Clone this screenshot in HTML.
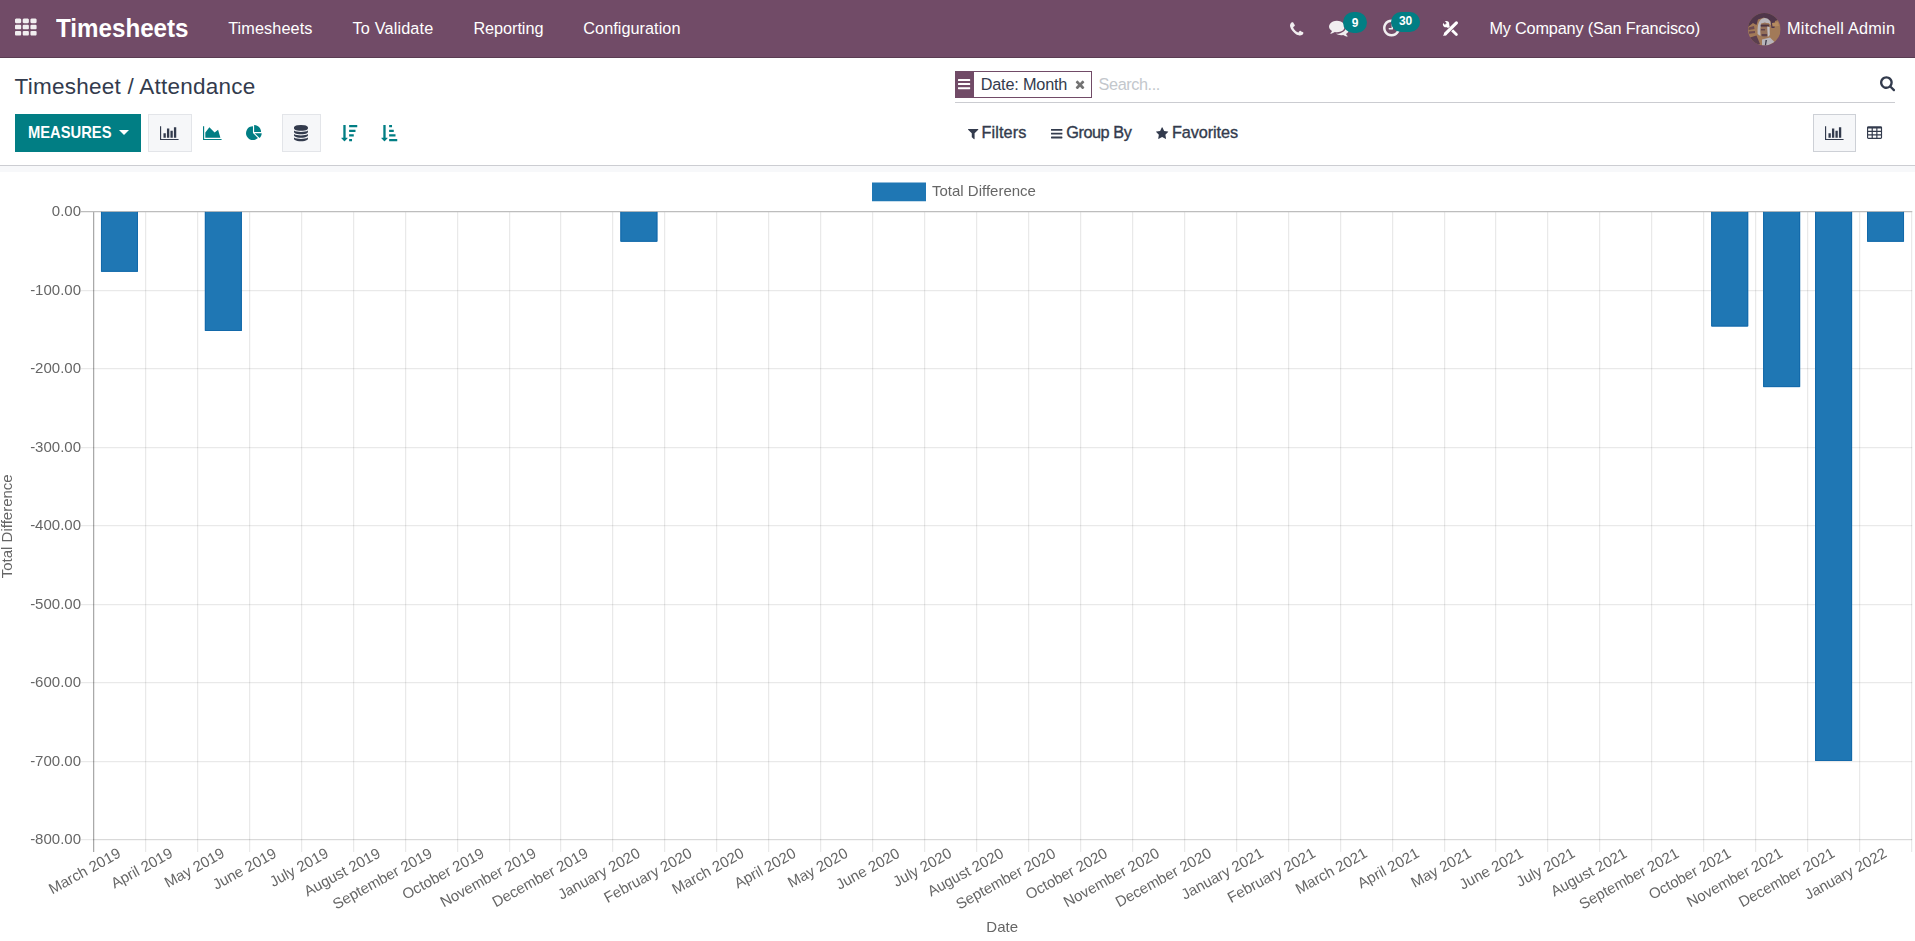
<!DOCTYPE html>
<html lang="en"><head><meta charset="utf-8"><title>Odoo - Timesheet / Attendance</title>
<style>
*{box-sizing:border-box}
html,body{margin:0;padding:0}
body{width:1915px;height:941px;overflow:hidden;background:#fff;font-family:"Liberation Sans",Arial,sans-serif;position:relative}
.navbar{position:absolute;left:0;top:0;width:1915px;height:58px;background:#714B67;border-bottom:1px solid #5a3c52}
.cp{position:absolute;left:0;top:58px;width:1915px;height:108px;background:#fff;border-bottom:1px solid #cccdd2}
.cp > *{margin-top:-58px}
.content{position:absolute;left:0;top:166px;width:1915px;height:775px;background:#f7f8fa}
.content:before{content:"";position:absolute;left:0;top:6px;width:1915px;height:769px;background:#fff}
.chart{position:absolute;margin-top:-166px;will-change:transform}
.t{position:absolute;white-space:pre;display:block}
.ic{position:absolute;display:block;overflow:visible}
.badge{position:absolute;border-radius:11px;background:#017e84}
.sk{-webkit-text-stroke:0.35px currentColor}
.btn-primary{position:absolute;background:#017e84}
.btn-active{position:absolute;background:#f6f7f9;border:1px solid #e3e5e9}
.btn-active.vs{border-color:#cdd0d6}
.caret{position:absolute;width:0;height:0;border-left:5px solid transparent;border-right:5px solid transparent;border-top:5.5px solid #fff}
.facet{position:absolute;border:1px solid #714B67;background:#fff}
.facet i{position:absolute;left:-1px;top:-1px;width:18.8px;height:27px;background:#714B67}
.sline{position:absolute;height:1px;background:#cbccd1}
</style></head>
<body>
<header class="navbar"><svg class="ic" style="left:14.80px;top:17.46px;width:21.60px;height:21.60px;" viewBox="0 -1536 1792 1792"><path fill="#f1eef0" transform="scale(1,-1)" d="M512 288v-192q0 -40 -28 -68t-68 -28h-320q-40 0 -68 28t-28 68v192q0 40 28 68t68 28h320q40 0 68 -28t28 -68zM512 800v-192q0 -40 -28 -68t-68 -28h-320q-40 0 -68 28t-28 68v192q0 40 28 68t68 28h320q40 0 68 -28t28 -68zM1152 288v-192q0 -40 -28 -68t-68 -28h-320 q-40 0 -68 28t-28 68v192q0 40 28 68t68 28h320q40 0 68 -28t28 -68zM512 1312v-192q0 -40 -28 -68t-68 -28h-320q-40 0 -68 28t-28 68v192q0 40 28 68t68 28h320q40 0 68 -28t28 -68zM1152 800v-192q0 -40 -28 -68t-68 -28h-320q-40 0 -68 28t-28 68v192q0 40 28 68t68 28 h320q40 0 68 -28t28 -68zM1792 288v-192q0 -40 -28 -68t-68 -28h-320q-40 0 -68 28t-28 68v192q0 40 28 68t68 28h320q40 0 68 -28t28 -68zM1152 1312v-192q0 -40 -28 -68t-68 -28h-320q-40 0 -68 28t-28 68v192q0 40 28 68t68 28h320q40 0 68 -28t28 -68zM1792 800v-192 q0 -40 -28 -68t-68 -28h-320q-40 0 -68 28t-28 68v192q0 40 28 68t68 28h320q40 0 68 -28t28 -68zM1792 1312v-192q0 -40 -28 -68t-68 -28h-320q-40 0 -68 28t-28 68v192q0 40 28 68t68 28h320q40 0 68 -28t28 -68z"/></svg>
<span id="brand" class="t" style="left:56.20px;top:14px;font-size:25px;line-height:28px;color:#fff;font-weight:700;letter-spacing:0.000px;transform:scaleX(0.9664);transform-origin:0 0;">Timesheets</span>
<span id="m1" class="t" style="left:228.20px;top:19px;font-size:16.25px;line-height:18px;color:#fff;font-weight:400;letter-spacing:0.090px;">Timesheets</span>
<span id="m2" class="t" style="left:352.60px;top:19px;font-size:16.25px;line-height:18px;color:#fff;font-weight:400;letter-spacing:0.145px;">To Validate</span>
<span id="m3" class="t" style="left:473.40px;top:19px;font-size:16.25px;line-height:18px;color:#fff;font-weight:400;letter-spacing:-0.052px;">Reporting</span>
<span id="m4" class="t" style="left:583.30px;top:19px;font-size:16.25px;line-height:18px;color:#fff;font-weight:400;letter-spacing:0.041px;">Configuration</span>
<svg class="ic" style="left:1290.00px;top:20.69px;width:13.36px;height:17.00px;" viewBox="0 -1536 1408 1792"><path fill="#f1eef0" transform="scale(1,-1)" d="M1408 296q0 -27 -10 -70.5t-21 -68.5q-21 -50 -122 -106q-94 -51 -186 -51q-27 0 -53 3.5t-57.5 12.5t-47 14.5t-55.5 20.5t-49 18q-98 35 -175 83q-127 79 -264 216t-216 264q-48 77 -83 175q-3 9 -18 49t-20.5 55.5t-14.5 47t-12.5 57.5t-3.5 53q0 92 51 186 q56 101 106 122q25 11 68.5 21t70.5 10q14 0 21 -3q18 -6 53 -76q11 -19 30 -54t35 -63.5t31 -53.5q3 -4 17.5 -25t21.5 -35.5t7 -28.5q0 -20 -28.5 -50t-62 -55t-62 -53t-28.5 -46q0 -9 5 -22.5t8.5 -20.5t14 -24t11.5 -19q76 -137 174 -235t235 -174q2 -1 19 -11.5t24 -14 t20.5 -8.5t22.5 -5q18 0 46 28.5t53 62t55 62t50 28.5q14 0 28.5 -7t35.5 -21.5t25 -17.5q25 -15 53.5 -31t63.5 -35t54 -30q70 -35 76 -53q3 -7 3 -21z"/></svg>
<svg class="ic" style="left:1329.00px;top:17.54px;width:20.00px;height:20.00px;" viewBox="0 -1536 1792 1792"><path fill="#f1eef0" transform="scale(1,-1)" d="M1408 768q0 -139 -94 -257t-256.5 -186.5t-353.5 -68.5q-86 0 -176 16q-124 -88 -278 -128q-36 -9 -86 -16h-3q-11 0 -20.5 8t-11.5 21q-1 3 -1 6.5t0.5 6.5t2 6l2.5 5t3.5 5.5t4 5t4.5 5t4 4.5q5 6 23 25t26 29.5t22.5 29t25 38.5t20.5 44q-124 72 -195 177t-71 224 q0 139 94 257t256.5 186.5t353.5 68.5t353.5 -68.5t256.5 -186.5t94 -257zM1792 512q0 -120 -71 -224.5t-195 -176.5q10 -24 20.5 -44t25 -38.5t22.5 -29t26 -29.5t23 -25q1 -1 4 -4.5t4.5 -5t4 -5t3.5 -5.5l2.5 -5t2 -6t0.5 -6.5t-1 -6.5q-3 -14 -13 -22t-22 -7 q-50 7 -86 16q-154 40 -278 128q-90 -16 -176 -16q-271 0 -472 132q58 -4 88 -4q161 0 309 45t264 129q125 92 192 212t67 254q0 77 -23 152q129 -71 204 -178t75 -230z"/></svg>
<span class="badge" style="left:1343px;top:11.5px;width:24px;height:21px"></span>
<span id="b1" class="t" style="left:1351.70px;top:16px;font-size:12px;line-height:14px;color:#fff;font-weight:700;letter-spacing:-0.084px;">9</span>
<svg class="ic" style="left:1383.00px;top:17.87px;width:17.14px;height:20.00px;" viewBox="0 -1536 1536 1792"><path fill="#f1eef0" transform="scale(1,-1)" d="M896 992v-448q0 -14 -9 -23t-23 -9h-320q-14 0 -23 9t-9 23v64q0 14 9 23t23 9h224v352q0 14 9 23t23 9h64q14 0 23 -9t9 -23zM1312 640q0 148 -73 273t-198 198t-273 73t-273 -73t-198 -198t-73 -273t73 -273t198 -198t273 -73t273 73t198 198t73 273zM1536 640 q0 -209 -103 -385.5t-279.5 -279.5t-385.5 -103t-385.5 103t-279.5 279.5t-103 385.5t103 385.5t279.5 279.5t385.5 103t385.5 -103t279.5 -279.5t103 -385.5z"/></svg>
<span class="badge" style="left:1391.2px;top:11.5px;width:29px;height:20.5px"></span>
<span id="b2" class="t" style="left:1399.00px;top:14px;font-size:12px;line-height:14px;color:#fff;font-weight:700;letter-spacing:-0.180px;">30</span>
<svg class="ic" style="left:1442.8px;top:20.9px;width:15.3px;height:15.1px" viewBox="0 0 15.3 15.1"><circle cx="3.1" cy="3.2" r="3.15" fill="#fff"/><path d="M-0.4 -0.3 L2.7 2.8" stroke="#714B67" stroke-width="2.5" stroke-linecap="round" fill="none"/><path d="M3.6 3.7 L13.4 13.5" stroke="#fff" stroke-width="2.8" stroke-linecap="round" fill="none"/><path d="M13.4 1.9 L2.6 12.7" stroke="#714B67" stroke-width="4.4" stroke-linecap="butt" fill="none"/><path d="M13.4 1.9 L2.6 12.7" stroke="#fff" stroke-width="3.2" stroke-linecap="round" fill="none"/><path d="M3.85 13.95 L1.35 11.45 L0.2 15.1 Z" fill="#fff"/></svg>
<span id="comp" class="t" style="left:1489.40px;top:19px;font-size:16.25px;line-height:18px;color:#fff;font-weight:400;letter-spacing:-0.170px;">My Company (San Francisco)</span>
<svg class="ic" style="left:1747.8px;top:12.7px;width:32.6px;height:32.6px" viewBox="0 0 32.6 32.6"><defs><clipPath id="avc"><circle cx="16.3" cy="16.3" r="16.3"/></clipPath></defs><g clip-path="url(#avc)"><rect width="32.6" height="32.6" fill="#a27a58"/><path d="M0 0 H32.6 V6 L27 8 L26.5 15 L23.5 15 L22.5 8 L16 4.5 L10 6.5 L8.5 12 L5 10 L0 14 Z" fill="#4f364a"/><path d="M9.6 21 Q8.6 6 16.5 5 Q23 5.4 22.6 12 L20.5 10 L13.2 10.2 L12.4 23 Z" fill="#b9b5ba"/><ellipse cx="16.8" cy="17" rx="4.5" ry="7.4" fill="#94705a"/><rect x="12.6" y="11.6" width="8.6" height="2" fill="#4c3442"/><rect x="13" y="16.2" width="4" height="1.2" fill="#5a3f49"/><rect x="13.6" y="21" width="5.6" height="2.2" fill="#5d424b"/><path d="M19.2 13.5 L21.6 14 L21.8 22 L19.8 24 Z" fill="#c4c0c3"/><path d="M14 26.5 L22 24.5 L26.5 29 L20 32.6 L14 32.6 Z" fill="#b7b4ba"/><path d="M17.5 27 L19 27 L18 32.6 L16.8 32.6 Z" fill="#3d3a4a"/><path d="M2 24.5 L8.5 22.5 L12 31 L8 32.6 L2 29 Z" fill="#5b3f4f"/><path d="M0.5 14.5 L6 13 L6.5 16 L0.5 17 Z M1 18.5 L7 18 L7 20 L1 20.8 Z" fill="#6c4a50"/><path d="M24 10 L30 9 L31 13 L24.5 13.5 Z" fill="#b58a60"/></g></svg>
<span id="user" class="t" style="left:1787.00px;top:19px;font-size:16.25px;line-height:18px;color:#fff;font-weight:400;letter-spacing:0.245px;">Mitchell Admin</span></header>
<section class="cp"><span id="bc" class="t" style="left:14.60px;top:74px;font-size:22.5px;line-height:25px;color:#333b4d;font-weight:400;letter-spacing:0.242px;">Timesheet / Attendance</span>
<div class="btn-primary" style="left:15px;top:114px;width:126px;height:37.6px"></div>
<span id="meas" class="t" style="left:27.70px;top:123px;font-size:16.25px;line-height:18px;color:#fff;font-weight:700;letter-spacing:0.000px;transform:scaleX(0.9065);transform-origin:0 0;">MEASURES</span>
<span class="caret" style="left:119px;top:130.2px"></span>
<div class="btn-active" style="left:148px;top:114px;width:43.7px;height:37.6px"></div>
<svg class="ic" style="left:160.40px;top:125.30px;width:18.57px;height:16.25px;" viewBox="0 -1536 2048 1792"><path fill="#333b4d" transform="scale(1,-1)" d="M640 640v-512h-256v512h256zM1024 1152v-1024h-256v1024h256zM2048 0v-128h-2048v1536h128v-1408h1920zM1408 896v-768h-256v768h256zM1792 1280v-1152h-256v1152h256z"/></svg>
<svg class="ic" style="left:203.20px;top:125.30px;width:18.57px;height:16.25px;" viewBox="0 -1536 2048 1792"><path fill="#017e84" transform="scale(1,-1)" d="M2048 0v-128h-2048v1536h128v-1408h1920zM1664 1024l256 -896h-1664v576l448 576l576 -576z"/></svg>
<svg class="ic" style="left:245.90px;top:125.30px;width:16.25px;height:16.25px;" viewBox="0 -1536 1792 1792"><path fill="#017e84" transform="scale(1,-1)" d="M768 646l546 -546q-106 -108 -247.5 -168t-298.5 -60q-209 0 -385.5 103t-279.5 279.5t-103 385.5t103 385.5t279.5 279.5t385.5 103v-762zM955 640h773q0 -157 -60 -298.5t-168 -247.5zM1664 768h-768v768q209 0 385.5 -103t279.5 -279.5t103 -385.5z"/></svg>
<div class="btn-active" style="left:282px;top:114px;width:38.9px;height:37.6px"></div>
<svg class="ic" style="left:294.40px;top:125.30px;width:13.93px;height:16.25px;" viewBox="0 -1536 1536 1792"><path fill="#333b4d" transform="scale(1,-1)" d="M768 768q237 0 443 43t325 127v-170q0 -69 -103 -128t-280 -93.5t-385 -34.5t-385 34.5t-280 93.5t-103 128v170q119 -84 325 -127t443 -43zM768 0q237 0 443 43t325 127v-170q0 -69 -103 -128t-280 -93.5t-385 -34.5t-385 34.5t-280 93.5t-103 128v170q119 -84 325 -127 t443 -43zM768 384q237 0 443 43t325 127v-170q0 -69 -103 -128t-280 -93.5t-385 -34.5t-385 34.5t-280 93.5t-103 128v170q119 -84 325 -127t443 -43zM768 1536q208 0 385 -34.5t280 -93.5t103 -128v-128q0 -69 -103 -128t-280 -93.5t-385 -34.5t-385 34.5t-280 93.5 t-103 128v128q0 69 103 128t280 93.5t385 34.5z"/></svg>
<svg class="ic" style="left:340.70px;top:125.30px;width:16.25px;height:16.25px;" viewBox="0 -1536 1792 1792"><path fill="#017e84" transform="scale(1,-1)" d="M1216 -32v-192q0 -14 -9 -23t-23 -9h-256q-14 0 -23 9t-9 23v192q0 14 9 23t23 9h256q14 0 23 -9t9 -23zM736 96q0 -12 -10 -24l-319 -319q-10 -9 -23 -9q-12 0 -23 9l-320 320q-15 16 -7 35q8 20 30 20h192v1376q0 14 9 23t23 9h192q14 0 23 -9t9 -23v-1376h192 q14 0 23 -9t9 -23zM1408 480v-192q0 -14 -9 -23t-23 -9h-448q-14 0 -23 9t-9 23v192q0 14 9 23t23 9h448q14 0 23 -9t9 -23zM1600 992v-192q0 -14 -9 -23t-23 -9h-640q-14 0 -23 9t-9 23v192q0 14 9 23t23 9h640q14 0 23 -9t9 -23zM1792 1504v-192q0 -14 -9 -23t-23 -9h-832 q-14 0 -23 9t-9 23v192q0 14 9 23t23 9h832q14 0 23 -9t9 -23z"/></svg>
<svg class="ic" style="left:381.00px;top:125.30px;width:16.25px;height:16.25px;" viewBox="0 -1536 1792 1792"><path fill="#017e84" transform="scale(1,-1)" d="M736 96q0 -12 -10 -24l-319 -319q-10 -9 -23 -9q-12 0 -23 9l-320 320q-15 16 -7 35q8 20 30 20h192v1376q0 14 9 23t23 9h192q14 0 23 -9t9 -23v-1376h192q14 0 23 -9t9 -23zM1792 -32v-192q0 -14 -9 -23t-23 -9h-832q-14 0 -23 9t-9 23v192q0 14 9 23t23 9h832 q14 0 23 -9t9 -23zM1600 480v-192q0 -14 -9 -23t-23 -9h-640q-14 0 -23 9t-9 23v192q0 14 9 23t23 9h640q14 0 23 -9t9 -23zM1408 992v-192q0 -14 -9 -23t-23 -9h-448q-14 0 -23 9t-9 23v192q0 14 9 23t23 9h448q14 0 23 -9t9 -23zM1216 1504v-192q0 -14 -9 -23t-23 -9h-256 q-14 0 -23 9t-9 23v192q0 14 9 23t23 9h256q14 0 23 -9t9 -23z"/></svg>
<div class="facet" style="left:955px;top:71px;width:137px;height:27px"><i></i></div>
<svg class="ic" style="left:958.20px;top:77.37px;width:12.17px;height:14.20px;" viewBox="0 -1536 1536 1792"><path fill="#fff" transform="scale(1,-1)" d="M1536 192v-128q0 -26 -19 -45t-45 -19h-1408q-26 0 -45 19t-19 45v128q0 26 19 45t45 19h1408q26 0 45 -19t19 -45zM1536 704v-128q0 -26 -19 -45t-45 -19h-1408q-26 0 -45 19t-19 45v128q0 26 19 45t45 19h1408q26 0 45 -19t19 -45zM1536 1216v-128q0 -26 -19 -45 t-45 -19h-1408q-26 0 -45 19t-19 45v128q0 26 19 45t45 19h1408q26 0 45 -19t19 -45z"/></svg>
<span id="facet" class="t" style="left:980.70px;top:75px;font-size:16.25px;line-height:18px;color:#333b4d;font-weight:400;letter-spacing:-0.183px;">Date: Month</span>
<svg class="ic" style="left:1075.31px;top:78.19px;width:10.06px;height:12.80px;" viewBox="0 -1536 1408 1792"><path fill="#737373" transform="scale(1,-1)" d="M1298 214q0 -40 -28 -68l-136 -136q-28 -28 -68 -28t-68 28l-294 294l-294 -294q-28 -28 -68 -28t-68 28l-136 136q-28 28 -28 68t28 68l294 294l-294 294q-28 28 -28 68t28 68l136 136q28 28 68 28t68 -28l294 -294l294 294q28 28 68 28t68 -28l136 -136q28 -28 28 -68 t-28 -68l-294 -294l294 -294q28 -28 28 -68z"/></svg>
<span id="ph" class="t" style="left:1098.60px;top:75px;font-size:16.25px;line-height:18px;color:#c3c7cc;font-weight:400;letter-spacing:-0.415px;">Search...</span>
<svg class="ic" style="left:1879.50px;top:75.44px;width:15.09px;height:16.25px;" viewBox="0 -1536 1664 1792"><path fill="#333b4d" transform="scale(1,-1)" d="M1152 704q0 185 -131.5 316.5t-316.5 131.5t-316.5 -131.5t-131.5 -316.5t131.5 -316.5t316.5 -131.5t316.5 131.5t131.5 316.5zM1664 -128q0 -52 -38 -90t-90 -38q-54 0 -90 38l-343 342q-179 -124 -399 -124q-143 0 -273.5 55.5t-225 150t-150 225t-55.5 273.5 t55.5 273.5t150 225t225 150t273.5 55.5t273.5 -55.5t225 -150t150 -225t55.5 -273.5q0 -220 -124 -399l343 -343q37 -37 37 -90z"/></svg>
<div class="sline" style="left:955px;top:102px;width:939.6px"></div>
<svg class="ic" style="left:967.51px;top:127.11px;width:10.37px;height:13.20px;" viewBox="0 -1536 1408 1792"><path fill="#333b4d" transform="scale(1,-1)" d="M1403 1241q17 -41 -14 -70l-493 -493v-742q0 -42 -39 -59q-13 -5 -25 -5q-27 0 -45 19l-256 256q-19 19 -19 45v486l-493 493q-31 29 -14 70q17 39 59 39h1280q42 0 59 -39z"/></svg>
<span id="f1" class="t sk" style="left:981.50px;top:123px;font-size:16.25px;line-height:18px;color:#333b4d;font-weight:400;letter-spacing:0.108px;">Filters</span>
<svg class="ic" style="left:1050.90px;top:126.80px;width:11.40px;height:13.30px;" viewBox="0 -1536 1536 1792"><path fill="#333b4d" transform="scale(1,-1)" d="M1536 192v-128q0 -26 -19 -45t-45 -19h-1408q-26 0 -45 19t-19 45v128q0 26 19 45t45 19h1408q26 0 45 -19t19 -45zM1536 704v-128q0 -26 -19 -45t-45 -19h-1408q-26 0 -45 19t-19 45v128q0 26 19 45t45 19h1408q26 0 45 -19t19 -45zM1536 1216v-128q0 -26 -19 -45 t-45 -19h-1408q-26 0 -45 19t-19 45v128q0 26 19 45t45 19h1408q26 0 45 -19t19 -45z"/></svg>
<span id="f2" class="t sk" style="left:1066.20px;top:123px;font-size:16.25px;line-height:18px;color:#333b4d;font-weight:400;letter-spacing:-0.431px;">Group By</span>
<svg class="ic" style="left:1155.50px;top:127.06px;width:12.26px;height:13.20px;" viewBox="0 -1536 1664 1792"><path fill="#333b4d" transform="scale(1,-1)" d="M1664 889q0 -22 -26 -48l-363 -354l86 -500q1 -7 1 -20q0 -21 -10.5 -35.5t-30.5 -14.5q-19 0 -40 12l-449 236l-449 -236q-22 -12 -40 -12q-21 0 -31.5 14.5t-10.5 35.5q0 6 2 20l86 500l-364 354q-25 27 -25 48q0 37 56 46l502 73l225 455q19 41 49 41t49 -41l225 -455 l502 -73q56 -9 56 -46z"/></svg>
<span id="f3" class="t sk" style="left:1172.00px;top:123px;font-size:16.25px;line-height:18px;color:#333b4d;font-weight:400;letter-spacing:-0.092px;">Favorites</span>
<div class="btn-active vs" style="left:1813px;top:114px;width:42.6px;height:37.6px"></div>
<svg class="ic" style="left:1824.60px;top:125.30px;width:18.57px;height:16.25px;" viewBox="0 -1536 2048 1792"><path fill="#333b4d" transform="scale(1,-1)" d="M640 640v-512h-256v512h256zM1024 1152v-1024h-256v1024h256zM2048 0v-128h-2048v1536h128v-1408h1920zM1408 896v-768h-256v768h256zM1792 1280v-1152h-256v1152h256z"/></svg>
<svg class="ic" style="left:1867.00px;top:125.30px;width:15.09px;height:16.25px;" viewBox="0 -1536 1664 1792"><path fill="#333b4d" transform="scale(1,-1)" d="M512 160v192q0 14 -9 23t-23 9h-320q-14 0 -23 -9t-9 -23v-192q0 -14 9 -23t23 -9h320q14 0 23 9t9 23zM512 544v192q0 14 -9 23t-23 9h-320q-14 0 -23 -9t-9 -23v-192q0 -14 9 -23t23 -9h320q14 0 23 9t9 23zM1024 160v192q0 14 -9 23t-23 9h-320q-14 0 -23 -9t-9 -23 v-192q0 -14 9 -23t23 -9h320q14 0 23 9t9 23zM512 928v192q0 14 -9 23t-23 9h-320q-14 0 -23 -9t-9 -23v-192q0 -14 9 -23t23 -9h320q14 0 23 9t9 23zM1024 544v192q0 14 -9 23t-23 9h-320q-14 0 -23 -9t-9 -23v-192q0 -14 9 -23t23 -9h320q14 0 23 9t9 23zM1536 160v192 q0 14 -9 23t-23 9h-320q-14 0 -23 -9t-9 -23v-192q0 -14 9 -23t23 -9h320q14 0 23 9t9 23zM1024 928v192q0 14 -9 23t-23 9h-320q-14 0 -23 -9t-9 -23v-192q0 -14 9 -23t23 -9h320q14 0 23 9t9 23zM1536 544v192q0 14 -9 23t-23 9h-320q-14 0 -23 -9t-9 -23v-192 q0 -14 9 -23t23 -9h320q14 0 23 9t9 23zM1536 928v192q0 14 -9 23t-23 9h-320q-14 0 -23 -9t-9 -23v-192q0 -14 9 -23t23 -9h320q14 0 23 9t9 23zM1664 1248v-1088q0 -66 -47 -113t-113 -47h-1344q-66 0 -113 47t-47 113v1088q0 66 47 113t113 47h1344q66 0 113 -47t47 -113 z"/></svg></section>
<main class="content"><svg class="chart" width="1915" height="769" viewBox="0 172 1915 769" style="left:0;top:172px" font-family="Liberation Sans, Arial, Helvetica, sans-serif" font-size="15" fill="#666">
<rect x="872" y="182.5" width="54" height="18.75" fill="#1f77b4"/>
<text x="932" y="196.3">Total Difference</text>
<g><rect x="93" y="211.0" width="1.25" height="641.0" fill="#a9a9a9"/><rect x="145" y="211.0" width="1.25" height="641.0" fill="rgba(0,0,0,0.088)"/><rect x="197" y="211.0" width="1.25" height="641.0" fill="rgba(0,0,0,0.088)"/><rect x="249" y="211.0" width="1.25" height="641.0" fill="rgba(0,0,0,0.088)"/><rect x="301" y="211.0" width="1.25" height="641.0" fill="rgba(0,0,0,0.088)"/><rect x="353" y="211.0" width="1.25" height="641.0" fill="rgba(0,0,0,0.088)"/><rect x="405" y="211.0" width="1.25" height="641.0" fill="rgba(0,0,0,0.088)"/><rect x="457" y="211.0" width="1.25" height="641.0" fill="rgba(0,0,0,0.088)"/><rect x="509" y="211.0" width="1.25" height="641.0" fill="rgba(0,0,0,0.088)"/><rect x="560" y="211.0" width="1.25" height="641.0" fill="rgba(0,0,0,0.088)"/><rect x="612" y="211.0" width="1.25" height="641.0" fill="rgba(0,0,0,0.088)"/><rect x="664" y="211.0" width="1.25" height="641.0" fill="rgba(0,0,0,0.088)"/><rect x="716" y="211.0" width="1.25" height="641.0" fill="rgba(0,0,0,0.088)"/><rect x="768" y="211.0" width="1.25" height="641.0" fill="rgba(0,0,0,0.088)"/><rect x="820" y="211.0" width="1.25" height="641.0" fill="rgba(0,0,0,0.088)"/><rect x="872" y="211.0" width="1.25" height="641.0" fill="rgba(0,0,0,0.088)"/><rect x="924" y="211.0" width="1.25" height="641.0" fill="rgba(0,0,0,0.088)"/><rect x="976" y="211.0" width="1.25" height="641.0" fill="rgba(0,0,0,0.088)"/><rect x="1028" y="211.0" width="1.25" height="641.0" fill="rgba(0,0,0,0.088)"/><rect x="1080" y="211.0" width="1.25" height="641.0" fill="rgba(0,0,0,0.088)"/><rect x="1132" y="211.0" width="1.25" height="641.0" fill="rgba(0,0,0,0.088)"/><rect x="1184" y="211.0" width="1.25" height="641.0" fill="rgba(0,0,0,0.088)"/><rect x="1236" y="211.0" width="1.25" height="641.0" fill="rgba(0,0,0,0.088)"/><rect x="1288" y="211.0" width="1.25" height="641.0" fill="rgba(0,0,0,0.088)"/><rect x="1340" y="211.0" width="1.25" height="641.0" fill="rgba(0,0,0,0.088)"/><rect x="1392" y="211.0" width="1.25" height="641.0" fill="rgba(0,0,0,0.088)"/><rect x="1444" y="211.0" width="1.25" height="641.0" fill="rgba(0,0,0,0.088)"/><rect x="1495" y="211.0" width="1.25" height="641.0" fill="rgba(0,0,0,0.088)"/><rect x="1547" y="211.0" width="1.25" height="641.0" fill="rgba(0,0,0,0.088)"/><rect x="1599" y="211.0" width="1.25" height="641.0" fill="rgba(0,0,0,0.088)"/><rect x="1651" y="211.0" width="1.25" height="641.0" fill="rgba(0,0,0,0.088)"/><rect x="1703" y="211.0" width="1.25" height="641.0" fill="rgba(0,0,0,0.088)"/><rect x="1755" y="211.0" width="1.25" height="641.0" fill="rgba(0,0,0,0.088)"/><rect x="1807" y="211.0" width="1.25" height="641.0" fill="rgba(0,0,0,0.088)"/><rect x="1859" y="211.0" width="1.25" height="641.0" fill="rgba(0,0,0,0.088)"/><rect x="1911" y="211.0" width="1.25" height="641.0" fill="rgba(0,0,0,0.088)"/><rect x="81.0" y="211" width="1831.25" height="1.25" fill="#bdbdbd"/><rect x="81.0" y="290" width="1831.25" height="1.25" fill="rgba(0,0,0,0.088)"/><rect x="81.0" y="368" width="1831.25" height="1.25" fill="rgba(0,0,0,0.088)"/><rect x="81.0" y="447" width="1831.25" height="1.25" fill="rgba(0,0,0,0.088)"/><rect x="81.0" y="525" width="1831.25" height="1.25" fill="rgba(0,0,0,0.088)"/><rect x="81.0" y="604" width="1831.25" height="1.25" fill="rgba(0,0,0,0.088)"/><rect x="81.0" y="682" width="1831.25" height="1.25" fill="rgba(0,0,0,0.088)"/><rect x="81.0" y="761" width="1831.25" height="1.25" fill="rgba(0,0,0,0.088)"/><rect x="81.0" y="839" width="1831.25" height="1.25" fill="rgba(0,0,0,0.088)"/><rect x="93.0" y="839" width="1819.0" height="1.25" fill="rgba(0,0,0,0.07)"/></g>
<text x="81" y="216.0" text-anchor="end">0.00</text><text x="81" y="295.0" text-anchor="end">-100.00</text><text x="81" y="373.0" text-anchor="end">-200.00</text><text x="81" y="452.0" text-anchor="end">-300.00</text><text x="81" y="530.0" text-anchor="end">-400.00</text><text x="81" y="609.0" text-anchor="end">-500.00</text><text x="81" y="687.0" text-anchor="end">-600.00</text><text x="81" y="766.0" text-anchor="end">-700.00</text><text x="81" y="844.0" text-anchor="end">-800.00</text>
<rect x="100.97" y="211.9" width="37" height="59.90" fill="#1f77b4"/>
<path d="M101.47 211.9 V271.30 H137.47 V211.9" fill="none" stroke="#1369aa" stroke-width="1"/>
<rect x="204.86" y="211.9" width="37" height="119.10" fill="#1f77b4"/>
<path d="M205.36 211.9 V330.50 H241.36 V211.9" fill="none" stroke="#1369aa" stroke-width="1"/>
<rect x="620.40" y="211.9" width="37" height="29.85" fill="#1f77b4"/>
<path d="M620.90 211.9 V241.25 H656.90 V211.9" fill="none" stroke="#1369aa" stroke-width="1"/>
<rect x="1711.20" y="211.9" width="37" height="114.60" fill="#1f77b4"/>
<path d="M1711.70 211.9 V326.00 H1747.70 V211.9" fill="none" stroke="#1369aa" stroke-width="1"/>
<rect x="1763.14" y="211.9" width="37" height="175.20" fill="#1f77b4"/>
<path d="M1763.64 211.9 V386.60 H1799.64 V211.9" fill="none" stroke="#1369aa" stroke-width="1"/>
<rect x="1815.09" y="211.9" width="37" height="549.10" fill="#1f77b4"/>
<path d="M1815.59 211.9 V760.50 H1851.59 V211.9" fill="none" stroke="#1369aa" stroke-width="1"/>
<rect x="1867.03" y="211.9" width="37" height="29.85" fill="#1f77b4"/>
<path d="M1867.53 211.9 V241.25 H1903.53 V211.9" fill="none" stroke="#1369aa" stroke-width="1"/>
<text transform="translate(119.27,851.8) rotate(-28.7)" text-anchor="end" y="5.2">March 2019</text>
<text transform="translate(171.21,851.8) rotate(-28.7)" text-anchor="end" y="5.2">April 2019</text>
<text transform="translate(223.16,851.8) rotate(-28.7)" text-anchor="end" y="5.2">May 2019</text>
<text transform="translate(275.10,851.8) rotate(-28.7)" text-anchor="end" y="5.2">June 2019</text>
<text transform="translate(327.04,851.8) rotate(-28.7)" text-anchor="end" y="5.2">July 2019</text>
<text transform="translate(378.99,851.8) rotate(-28.7)" text-anchor="end" y="5.2">August 2019</text>
<text transform="translate(430.93,851.8) rotate(-28.7)" text-anchor="end" y="5.2">September 2019</text>
<text transform="translate(482.87,851.8) rotate(-28.7)" text-anchor="end" y="5.2">October 2019</text>
<text transform="translate(534.81,851.8) rotate(-28.7)" text-anchor="end" y="5.2">November 2019</text>
<text transform="translate(586.76,851.8) rotate(-28.7)" text-anchor="end" y="5.2">December 2019</text>
<text transform="translate(638.70,851.8) rotate(-28.7)" text-anchor="end" y="5.2">January 2020</text>
<text transform="translate(690.64,851.8) rotate(-28.7)" text-anchor="end" y="5.2">February 2020</text>
<text transform="translate(742.59,851.8) rotate(-28.7)" text-anchor="end" y="5.2">March 2020</text>
<text transform="translate(794.53,851.8) rotate(-28.7)" text-anchor="end" y="5.2">April 2020</text>
<text transform="translate(846.47,851.8) rotate(-28.7)" text-anchor="end" y="5.2">May 2020</text>
<text transform="translate(898.41,851.8) rotate(-28.7)" text-anchor="end" y="5.2">June 2020</text>
<text transform="translate(950.36,851.8) rotate(-28.7)" text-anchor="end" y="5.2">July 2020</text>
<text transform="translate(1002.30,851.8) rotate(-28.7)" text-anchor="end" y="5.2">August 2020</text>
<text transform="translate(1054.24,851.8) rotate(-28.7)" text-anchor="end" y="5.2">September 2020</text>
<text transform="translate(1106.19,851.8) rotate(-28.7)" text-anchor="end" y="5.2">October 2020</text>
<text transform="translate(1158.13,851.8) rotate(-28.7)" text-anchor="end" y="5.2">November 2020</text>
<text transform="translate(1210.07,851.8) rotate(-28.7)" text-anchor="end" y="5.2">December 2020</text>
<text transform="translate(1262.01,851.8) rotate(-28.7)" text-anchor="end" y="5.2">January 2021</text>
<text transform="translate(1313.96,851.8) rotate(-28.7)" text-anchor="end" y="5.2">February 2021</text>
<text transform="translate(1365.90,851.8) rotate(-28.7)" text-anchor="end" y="5.2">March 2021</text>
<text transform="translate(1417.84,851.8) rotate(-28.7)" text-anchor="end" y="5.2">April 2021</text>
<text transform="translate(1469.79,851.8) rotate(-28.7)" text-anchor="end" y="5.2">May 2021</text>
<text transform="translate(1521.73,851.8) rotate(-28.7)" text-anchor="end" y="5.2">June 2021</text>
<text transform="translate(1573.67,851.8) rotate(-28.7)" text-anchor="end" y="5.2">July 2021</text>
<text transform="translate(1625.61,851.8) rotate(-28.7)" text-anchor="end" y="5.2">August 2021</text>
<text transform="translate(1677.56,851.8) rotate(-28.7)" text-anchor="end" y="5.2">September 2021</text>
<text transform="translate(1729.50,851.8) rotate(-28.7)" text-anchor="end" y="5.2">October 2021</text>
<text transform="translate(1781.44,851.8) rotate(-28.7)" text-anchor="end" y="5.2">November 2021</text>
<text transform="translate(1833.39,851.8) rotate(-28.7)" text-anchor="end" y="5.2">December 2021</text>
<text transform="translate(1885.33,851.8) rotate(-28.7)" text-anchor="end" y="5.2">January 2022</text>
<text x="1002.2" y="931.7" text-anchor="middle">Date</text>
<text transform="translate(12.2,526.3) rotate(-90)" text-anchor="middle">Total Difference</text>
</svg></main>
</body></html>
